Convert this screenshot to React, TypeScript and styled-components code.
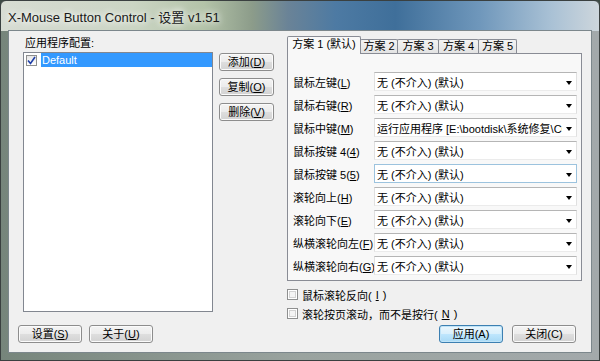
import React from 'react';
import styled, { createGlobalStyle, css } from 'styled-components';

const Global = createGlobalStyle`
  html, body { margin: 0; padding: 0; width: 600px; height: 361px; overflow: hidden; background: #3d4a44; }
  body { font-family: "Liberation Sans", "Noto Sans CJK SC", sans-serif; font-size: 11px; color: #000; }
  * { box-sizing: border-box; }
`;

const Window = styled.div`
  width: 600px;
  height: 361px;
  display: flex;
  flex-direction: column;
  padding: 0 7px 7px 7px;
  border: 1px solid #3a4040;
  border-radius: 6px 6px 0 0;
  background:
    linear-gradient(to right, #d7dcd3 0%, #cbd5c4 22%, #b3c3a8 34%, #8c9c8a 42%, #6a8397 48%, #4d7aa3 56%, #3f6f9a 66%, #6f97bb 80%, #a9c1d5 92%, #cdd6dc 100%) top left / 100% 30px no-repeat,
    linear-gradient(to right, #76857b 0%, #9aa39f 50%, #a3a9ab 100%);
`;

const TitleBar = styled.div`
  height: 29px;
  display: flex;
  align-items: center;
  padding-top: 1px;
  font-size: 13px;
  color: #1a1a1a;
  text-shadow: 0 0 6px #ffffff, 0 0 10px #ffffff;
  white-space: nowrap;
`;

const Client = styled.div`
  flex: 1;
  display: flex;
  gap: 7px;
  padding: 5px 9px 9px 9px;
  background: #f0f0f0;
  border: 1px solid #7c878c;
`;

const LeftCol = styled.div`
  width: 262px;
  display: flex;
  flex-direction: column;
`;

const GroupLabel = styled.div`
  margin: 1px 0 2px 7px;
  height: 13px;
  line-height: 13px;
`;

const ListRow = styled.div`
  display: flex;
  padding-left: 5px;
  gap: 6px;
`;

const ListBox = styled.div`
  width: 190px;
  height: 260px;
  background: #ffffff;
  border: 1px solid #828790;
`;

const ListItem = styled.div`
  height: 14px;
  display: flex;
  align-items: center;
  padding-left: 2px;
  gap: 4px;
`;

const ListCheck = styled.span`
  width: 11px;
  height: 11px;
  border: 1px solid #8e8f8f;
  background: linear-gradient(#e6e6e6, #ffffff);
  display: flex;
  align-items: center;
  justify-content: center;
`;

const Selected = styled.span`
  flex: 1;
  height: 14px;
  line-height: 14px;
  background: #3399ff;
  color: #ffffff;
  padding-left: 1px;
`;

const SideButtons = styled.div`
  display: flex;
  flex-direction: column;
  gap: 7px;
  padding-top: 1px;
`;

const Button = styled.button<{ $w?: number; $default?: boolean }>`
  width: ${(p) => p.$w ?? 64}px;
  height: 18px;
  padding: 0;
  font: inherit;
  color: #000;
  border: 1px solid #8d8d8d;
  border-radius: 3px;
  background: linear-gradient(#f4f4f4 0%, #ececec 48%, #dedede 52%, #d2d2d2 100%);
  box-shadow: inset 0 0 0 1px #fbfbfb;
  display: flex;
  align-items: center;
  justify-content: center;
  line-height: 16px;
  ${(p) =>
    p.$default &&
    css`
      border-color: #3c7fb1;
      box-shadow: inset 0 0 0 1px #bfe3f7;
      background: linear-gradient(#eaf6fd 0%, #d9f0fc 48%, #bee6fd 52%, #a7d9f5 100%);
    `}
`;

const BottomLeft = styled.div`
  margin-top: auto;
  display: flex;
  gap: 7px;
`;

const RightCol = styled.div`
  width: 295px;
  display: flex;
  flex-direction: column;
`;

const TabStrip = styled.div`
  height: 17px;
  display: flex;
  align-items: flex-end;
  position: relative;
  z-index: 1;
`;

const Tab = styled.div<{ $w: number; $active?: boolean }>`
  width: ${(p) => p.$w}px;
  margin-left: -1px;
  height: 14px;
  border: 1px solid #898c95;
  border-bottom: none;
  border-radius: 2px 2px 0 0;
  background: linear-gradient(#f3f3f3, #e3e3e3);
  display: flex;
  align-items: center;
  justify-content: center;
  white-space: nowrap;
  line-height: 13px;
  &:first-child { margin-left: 0; }
  ${(p) =>
    p.$active &&
    css`
      height: 18px;
      margin-bottom: -1px;
      background: #f8f8f8;
      padding-bottom: 2px;
      position: relative;
      z-index: 2;
    `}
`;

const Panel = styled.div`
  height: 228px;
  border: 1px solid #898c95;
  background: #f8f8f8;
  padding: 18px 4px 0 5px;
  display: flex;
  flex-direction: column;
  gap: 4px;
`;

const Row = styled.div`
  display: flex;
  align-items: center;
  height: 19px;
`;

const RowLabel = styled.div`
  width: 81px;
  white-space: nowrap;
`;

const Combo = styled.div<{ $focus?: boolean }>`
  width: 203px;
  height: 19px;
  background: #ffffff;
  border: 1px solid;
  border-color: #b5b5b5 #e0e0e0 #ebebeb #e0e0e0;
  display: flex;
  align-items: center;
  padding-left: 2px;
  padding-right: 4px;
  white-space: nowrap;
  overflow: hidden;
  ${(p) =>
    p.$focus &&
    css`
      border-color: #9cc3de;
    `}
`;

const ComboText = styled.span`
  flex: 1;
  min-width: 0;
  overflow: hidden;
  white-space: nowrap;
  text-overflow: clip;
`;

const Arrow = styled.span`
  width: 0;
  height: 0;
  margin-top: 3px;
  margin-left: 4px;
  border-left: 3.5px solid transparent;
  border-right: 3.5px solid transparent;
  border-top: 4px solid #000;
  flex: none;
`;

const Checks = styled.div`
  margin-top: 4px;
  display: flex;
  flex-direction: column;
`;

const CheckRow = styled.label`
  height: 19px;
  display: flex;
  align-items: center;
  gap: 4px;
`;

const Box = styled.span`
  width: 11px;
  height: 11px;
  border: 1px solid #8e8f8f;
  background: #f4f4f4;
  box-shadow: inset 0 0 0 1px #ffffff, inset 0 0 0 2px #d2d2d2;
`;

const BottomRight = styled.div`
  margin-top: auto;
  display: flex;
  justify-content: flex-end;
  gap: 9px;
  padding-right: 6px;
`;

const U = styled.u`
  text-decoration: underline;
`;

const lbl = (text: string, key: string) => (
  <>
    {text}(<U>{key}</U>)
  </>
);

const DEF = '无 (不介入) (默认)';

const rows: { label: string; key: string; value: string; focus?: boolean }[] = [
  { label: '鼠标左键', key: 'L', value: DEF },
  { label: '鼠标右键', key: 'R', value: DEF },
  { label: '鼠标中键', key: 'M', value: '运行应用程序 [E:\\bootdisk\\系统修复\\CCk' },
  { label: '鼠标按键 4', key: '4', value: DEF },
  { label: '鼠标按键 5', key: '5', value: DEF, focus: true },
  { label: '滚轮向上', key: 'H', value: DEF },
  { label: '滚轮向下', key: 'E', value: DEF },
  { label: '纵横滚轮向左', key: 'F', value: DEF },
  { label: '纵横滚轮向右', key: 'G', value: DEF },
];

const tabs = [
  { t: '方案 1 (默认)', w: 74 },
  { t: '方案 2', w: 38 },
  { t: '方案 3', w: 42 },
  { t: '方案 4', w: 41 },
  { t: '方案 5', w: 39 },
];

export default function App() {
  return (
    <>
      <Global />
      <Window>
        <TitleBar>X-Mouse Button Control - 设置 v1.51</TitleBar>
        <Client>
          <LeftCol>
            <GroupLabel>应用程序配置:</GroupLabel>
            <ListRow>
              <ListBox>
                <ListItem>
                  <ListCheck>
                    <svg width="9" height="9" viewBox="0 0 9 9">
                      <path d="M1 4.5 L3.5 7.5 L8 1" fill="none" stroke="#1f3fa8" strokeWidth="1.6" />
                    </svg>
                  </ListCheck>
                  <Selected>Default</Selected>
                </ListItem>
              </ListBox>
              <SideButtons>
                <Button $w={55}>{lbl('添加', 'D')}</Button>
                <Button $w={55}>{lbl('复制', 'O')}</Button>
                <Button $w={55}>{lbl('删除', 'V')}</Button>
              </SideButtons>
            </ListRow>
            <BottomLeft>
              <Button $w={64}>{lbl('设置', 'S')}</Button>
              <Button $w={64}>{lbl('关于', 'U')}</Button>
            </BottomLeft>
          </LeftCol>
          <RightCol>
            <TabStrip>
              {tabs.map((t, i) => (
                <Tab key={t.t} $w={t.w} $active={i === 0}>
                  {t.t}
                </Tab>
              ))}
            </TabStrip>
            <Panel>
              {rows.map((r) => (
                <Row key={r.label}>
                  <RowLabel>{lbl(r.label, r.key)}</RowLabel>
                  <Combo $focus={r.focus}>
                    <ComboText>{r.value}</ComboText>
                    <Arrow />
                  </Combo>
                </Row>
              ))}
            </Panel>
            <Checks>
              <CheckRow>
                <Box />
                {lbl('鼠标滚轮反向', 'I')}
              </CheckRow>
              <CheckRow>
                <Box />
                {lbl('滚轮按页滚动，而不是按行', 'N')}
              </CheckRow>
            </Checks>
            <BottomRight>
              <Button $w={64} $default>
                应用(A)
              </Button>
              <Button $w={64}>关闭(C)</Button>
            </BottomRight>
          </RightCol>
        </Client>
      </Window>
    </>
  );
}
